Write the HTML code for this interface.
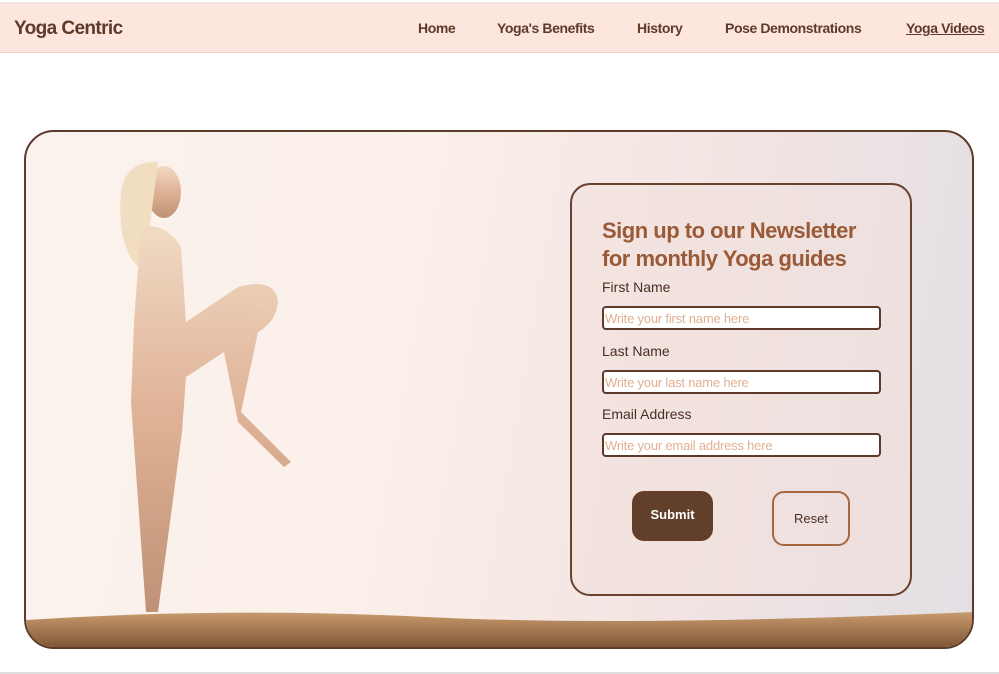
<!DOCTYPE html>
<html><head><meta charset="utf-8"><style>
*{box-sizing:border-box;margin:0;padding:0}
body{width:999px;height:674px;background:#fff;font-family:"Liberation Sans",sans-serif;position:relative;overflow:hidden}
.nav{position:absolute;top:2px;left:0;width:999px;height:51px;background:#fde6dd;border-top:1px solid #e6e6e6;border-bottom:1px solid #f2d2c4}
.logo{position:absolute;left:14px;top:15px;font-size:19px;font-weight:bold;color:#5e3a2a;letter-spacing:-0.6px}
.nav a{position:absolute;top:17px;font-size:14px;font-weight:bold;color:#5e3a2a;text-decoration:none;letter-spacing:-0.4px}
.hero{position:absolute;left:24px;top:130px;width:950px;height:519px;border:2px solid #5e3a2a;border-radius:30px;overflow:hidden;background:linear-gradient(100deg,#fbf3ee 0%,#fbefe9 40%,#f2e4e2 70%,#e2dfe4 100%)}
.form{position:absolute;left:570px;top:183px;width:342px;height:413px;border:2px solid #6a4030;border-radius:20px;background:rgba(240,224,220,0.55)}
h2{position:absolute;left:30px;top:32px;font-size:22px;line-height:28px;color:#9a5a38;font-weight:bold;letter-spacing:-0.5px}
.lb{position:absolute;left:30px;font-size:14px;color:#4a2e22}
.in{position:absolute;left:30px;width:279px;height:24px;border:2px solid #5e3a2a;border-radius:4px;background:#fff;font-size:13px;color:#e2b090;padding:3px 1px;line-height:15px;letter-spacing:-0.2px}
.sub{position:absolute;left:60px;top:306px;width:81px;height:50px;background:#613f2b;border-radius:12px;color:#fff;font-size:13px;font-weight:bold;text-align:center;line-height:48px}
.res{position:absolute;left:200px;top:306px;width:78px;height:55px;border:2px solid #a8683f;border-radius:12px;color:#4a2e22;font-size:13px;text-align:center;line-height:52px}
.bl{position:absolute;left:0;top:672px;width:999px;height:2px;background:#ddd}
</style></head><body>
<div class="nav"><div class="logo">Yoga Centric</div>
<a style="left:418px">Home</a><a style="left:497px">Yoga's Benefits</a><a style="left:637px">History</a><a style="left:725px">Pose Demonstrations</a><a style="left:906px;text-decoration:underline">Yoga Videos</a></div>
<div class="hero">
<svg width="950" height="519" style="position:absolute;left:0;top:0">
<defs><linearGradient id="g" x1="0" y1="0" x2="0" y2="1"><stop offset="0" stop-color="#f0d8c0"/><stop offset="0.5" stop-color="#dcaa8c"/><stop offset="1" stop-color="#b88668"/></linearGradient>
<linearGradient id="gr" x1="0" y1="0" x2="0" y2="1"><stop offset="0" stop-color="#c89a6e"/><stop offset="1" stop-color="#7a5030"/></linearGradient></defs>
<g fill="url(#g)" opacity="0.9">
<ellipse cx="138" cy="60" rx="17" ry="26"/>
<path d="M95 60 Q100 28 132 30 L118 140 Q90 120 95 60Z" fill="#f0dcbc"/>
<path d="M115 95 Q140 90 155 115 L160 190 L212 155 Q250 145 252 170 Q250 190 232 200 L215 280 L265 330 L258 335 L212 290 L198 220 L160 245 L156 300 L132 480 L120 480 L105 270 L108 190Z"/>
</g>
<path d="M0 488 Q200 475 400 485 T950 480 L950 519 L0 519Z" fill="url(#gr)"/>
</svg>
</div>
<div class="form">
<h2>Sign up to our Newsletter<br>for monthly Yoga guides</h2>
<div class="lb" style="top:94px">First Name</div>
<div class="in" style="top:121px">Write your first name here</div>
<div class="lb" style="top:158px">Last Name</div>
<div class="in" style="top:185px">Write your last name here</div>
<div class="lb" style="top:221px">Email Address</div>
<div class="in" style="top:248px">Write your email address here</div>
<div class="sub">Submit</div>
<div class="res">Reset</div>
</div>
<div class="bl"></div>
</body></html>
